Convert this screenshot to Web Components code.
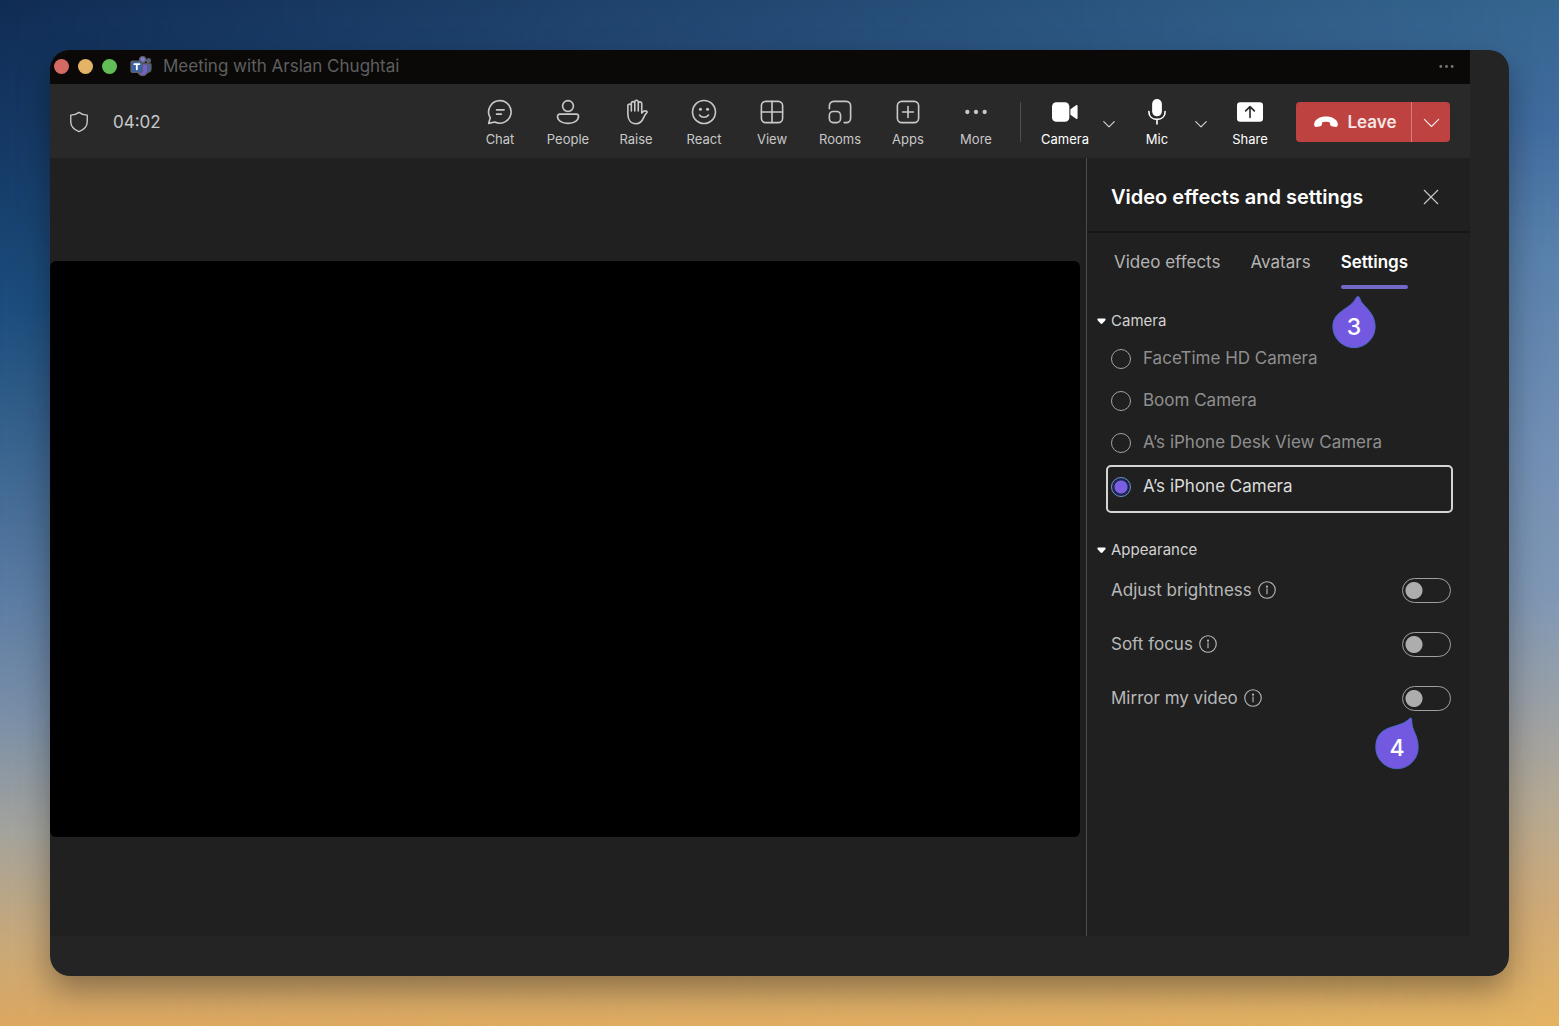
<!DOCTYPE html>
<html lang="en">
<head>
<meta charset="utf-8">
<title>Meeting with Arslan Chughtai</title>
<style>
    body {
        margin: 0;
        font-family: Inter, Roboto, "Liberation Sans", sans-serif;
        color: #c8c8c8;
    }
</style>
</head>
<body>
<meeting-desktop>
    <title-bar>Meeting with Arslan Chughtai</title-bar>
    <meeting-toolbar></meeting-toolbar>
    <video-stage></video-stage>
    <settings-panel></settings-panel>
</meeting-desktop>

<script>
const ICONS = {
    shield: `<path d="M12 1.500c2.600 2 5.600 2.900 9 3v7c0 5.500-3.500 9-9 11-5.500-2-9-5.500-9-11v-7c3.400-.1 6.400-1 9-3z"/>`,
    chat: `<path d="M12 1.500a10.400 10.400 0 1 1-4.800 19.700L1.500 22.500l1.500-5.200A10.400 10.400 0 0 1 12 1.500z"/><path d="M8.800 10h7M8.800 14h4.500"/>`,
    people: `<circle cx="12" cy="6.500" r="5"/><path d="M4.300 14h15.400a2 2 0 0 1 2 2c0 3.800-3.800 6.500-9.700 6.500s-9.700-2.700-9.700-6.500a2 2 0 0 1 2-2z"/>`,
    raise: `<path d="M4.500 14V6.300a1.600 1.600 0 0 1 3.200 0V4a1.600 1.600 0 0 1 3.200 0V2.800a1.600 1.600 0 0 1 3.200 0V4.300a1.600 1.600 0 0 1 3.200 0V13c1-1.500 2.500-2.300 4-1.900.9.300 1.200.9.700 1.500-1.500 1.300-2.200 2.800-3.200 5-1.200 2.900-3 5.200-6.800 5.200-4.800 0-7.500-3.500-7.500-8.800zM7.700 6v5M10.900 4v7M14.100 4v7"/>`,
    react: `<circle cx="12" cy="12" r="10.600"/><path d="M7.800 14.800c2 2.700 6.400 2.700 8.400 0"/><g fill="currentColor" stroke="none"><circle cx="8.700" cy="9.500" r="1.400"/><circle cx="15.300" cy="9.500" r="1.400"/></g>`,
    view: `<rect x="2.200" y="2.200" width="19.600" height="19.600" rx="4"/><path d="M12 2.200v19.600M2.200 12h19.600"/>`,
    rooms: `<path d="M2.200 9v-2.800a4 4 0 0 1 4-4h11.600a4 4 0 0 1 4 4v11.600a4 4 0 0 1-4 4h-2"/><rect x="2.200" y="11.500" width="10.300" height="10.300" rx="3.500"/>`,
    apps: `<rect x="2.200" y="2.200" width="19.600" height="19.600" rx="4"/><path d="M12 7v10M7 12h10"/>`,
    more: `<g fill="currentColor" stroke="none"><circle cx="4" cy="12" r="2"/><circle cx="12" cy="12" r="2"/><circle cx="20" cy="12" r="2"/></g>`,
    camera: `<g fill="currentColor" stroke="none"><rect x="0" y="3" width="16" height="18" rx="4"/><path d="M17 9.500l5.200-3.800c.8-.5 1.400-.1 1.400.7v11.200c0 .8-.6 1.200-1.400.7L17 14.500z"/></g>`,
    mic: `<rect x="7.500" y="0" width="9" height="16" rx="4.500" fill="currentColor" stroke="none"/><path d="M4.500 11.500c0 4.500 3 7.300 7.500 7.300s7.500-2.800 7.500-7.300M12 18.800V23"/>`,
    share: `<rect x="0" y="3" width="24" height="18" rx="3" fill="currentColor" stroke="none"/><path stroke="#292929" d="M12 17V7.500M8 11l4-4 4 4"/>`,
    chevron: `<path d="M3 8l9 9 9-9"/>`,
    close: `<path d="M3 3l18 18M21 3L3 21"/>`,
    hangup: `<path fill="currentColor" stroke="none" d="M12 6.500c6 0 11 2.700 11.800 7 .2 1.500-.2 3.600-1.800 3.500l-4.300-.8c-1.500-.3-1.700-1.800-1.700-3.700-2-1-6-1-8 0 0 1.900-.2 3.400-1.700 3.700L2 17c-1.600.1-2-2-1.800-3.500.8-4.300 5.800-7 11.800-7z"/>`,
    info: `<circle cx="12" cy="12" r="11"/><path d="M12 10.500V17"/><circle cx="12" cy="7.500" r="1.400" fill="currentColor" stroke="none"/>`,
    triangle: `<path fill="currentColor" stroke="none" d="M3 4h18c2.500.5 2.500 4 .8 5.500l-7.300 8c-1.400 1.500-3.600 1.500-5 0l-7.300-8C.5 8 .5 4.500 3 4z"/>`,
    teams: `<circle cx="14" cy="4.200" r="3.600" fill="#7b7fd8"/><circle cx="21" cy="5.500" r="2.300" fill="#4f62b4"/><path fill="#4560b0" d="M17 9.500h6.300c.5 0 .7.300.7.700V15c0 3-2 4.500-4 4.500S17 18 17 15z"/><path fill="#6f62d0" d="M8 9.500h12V17c0 3.700-2.700 6.500-6 6.500S8 20.700 8 17z"/><rect y="6" width="13.500" height="13.500" rx="1.500" fill="#3c62a6"/><path d="M4 9.800h6M7 9.800v6.200" stroke="#fff" stroke-width="2.200"/>`
};

/* <ui-icon name="chat" size="24"> */
class UiIcon extends HTMLElement {
    constructor() {
        super();
        this.attachShadow({ mode: "open" });
    }
    connectedCallback() {
        const size = this.getAttribute("size") || 24;
        const stroke = this.getAttribute("stroke") || 1.5;
        this.shadowRoot.innerHTML = `
            <style>
                :host { display: inline-flex; flex: none; }
                svg { display: block; overflow: visible; }
            </style>
            <svg width="${size}" height="${size}" viewBox="0 0 24 24" fill="none" stroke="currentColor"
                stroke-width="${stroke}" stroke-linecap="round" stroke-linejoin="round" aria-hidden="true">
                ${ICONS[this.getAttribute("name")]}
            </svg>
        `;
    }
}

class MeetingDesktop extends HTMLElement {
    constructor() {
        super();
        this.attachShadow({ mode: "open" });
        this.shadowRoot.innerHTML = `
            <style>
                :host {
                    display: flex;
                    position: relative;
                    box-sizing: border-box;
                    min-height: 100vh;
                    padding: 50px;
                    background: linear-gradient(#356690, #416c9f 12%, #5a82ad 25%, #7390b5 44%, #8098b5 58%, #99a0a8 68%, #b8aa92 79%, #cfaa78 88%, #e4b362);
                }
                /* darker sky, fading out to the right */
                :host::before {
                    content: "";
                    position: absolute;
                    inset: 0;
                    background: linear-gradient(#102c54, #153a66 15%, #1b4c7c 30%, #35608c 42%, #5a7ba2 58%, #7a8fa8 70%, #a3a39c 81%, #c8a878 92%, #dca760);
                    mask-image: linear-gradient(90deg, #000, transparent);
                }
                .shadow {
                    flex: 1;
                    display: flex;
                    position: relative;
                    border-radius: 20px;
                    box-shadow: 0 14px 32px rgba(0, 0, 0, 0.35);
                }
                main {
                    flex: 1;
                    display: grid;
                    grid-template-columns: 1fr 384px;
                    grid-template-rows: 34px 74px 1fr;
                    padding: 0 39px 40px 0;
                    border-radius: 20px;
                    overflow: hidden;
                    background: #242424;
                }
                ::slotted(title-bar), ::slotted(meeting-toolbar) { grid-column: 1 / -1; }
            </style>
            <div class="shadow"><main><slot></slot></main></div>
        `;
    }
}

class TitleBar extends HTMLElement {
    constructor() {
        super();
        this.attachShadow({ mode: "open" });
        this.shadowRoot.innerHTML = `
            <style>
                :host {
                    display: flex;
                    align-items: center;
                    padding: 0 15px 2px 4px;
                    background: #0a0908;
                    color: #5f5f5f;
                    font-size: 17px;
                }
                .lights { display: flex; gap: 9px; margin-right: 14px; }
                .lights i { width: 15px; height: 15px; border-radius: 50%; background: var(--c); }
                h1 { flex: 1; margin: 0 0 0 12px; font-size: 17px; font-weight: 400; line-height: 24px; }
                button { display: flex; padding: 0; border: 0; background: none; color: #777; }
            </style>
            <div class="lights">
                <i style="--c: #d46a64"></i><i style="--c: #e3b466"></i><i style="--c: #62bd56"></i>
            </div>
            <ui-icon name="teams" size="20"></ui-icon>
            <h1><slot></slot></h1>
            <button aria-label="Window options"><ui-icon name="more" size="17"></ui-icon></button>
        `;
    }
}

class ToolButton extends HTMLElement {
    constructor() {
        super();
        this.attachShadow({ mode: "open" });
    }
    connectedCallback() {
        this.shadowRoot.innerHTML = `
            <style>
                :host { display: block; width: 68px; }
                button {
                    display: flex;
                    flex-direction: column;
                    align-items: center;
                    gap: 4px;
                    width: 100%;
                    padding: 4px 0 0;
                    border: 0;
                    background: none;
                    color: inherit;
                    font: 13px/20px Inter, Roboto, sans-serif;
                }
            </style>
            <button><ui-icon name="${this.getAttribute("icon")}" size="26"></ui-icon><slot></slot></button>
        `;
    }
}

class LeaveButton extends HTMLElement {
    constructor() {
        super();
        this.attachShadow({ mode: "open" });
        this.shadowRoot.innerHTML = `
            <style>
                :host {
                    display: flex;
                    height: 40px;
                    border-radius: 4px;
                    overflow: hidden;
                    background: #bd4240;
                    color: #f6e6e4;
                }
                button {
                    display: flex;
                    align-items: center;
                    justify-content: center;
                    gap: 9px;
                    padding: 0;
                    border: 0;
                    background: none;
                    color: inherit;
                    font: 600 17px/24px Inter, Roboto, sans-serif;
                }
                .leave { width: 115px; padding-left: 4px; }
                .leave ui-icon { color: #fff; }
                .options { width: 39px; border-left: 1px solid #d9807c; }
            </style>
            <button class="leave"><ui-icon name="hangup" size="24"></ui-icon><slot></slot></button>
            <button class="options" aria-label="Leave options"><ui-icon name="chevron" size="19"></ui-icon></button>
        `;
    }
}

class MeetingToolbar extends HTMLElement {
    constructor() {
        super();
        this.attachShadow({ mode: "open" });
        this.shadowRoot.innerHTML = `
            <style>
                :host {
                    display: flex;
                    align-items: center;
                    padding: 2px 20px 0 18px;
                    background: #292929;
                }
                time { margin-left: 23px; font-size: 17px; line-height: 24px; }
                nav { display: flex; align-items: center; margin-left: auto; }
                hr { width: 1px; height: 40px; margin: 0 10px; border: 0; background: #524d4b; }
                .on { color: #fff; }
                .drop {
                    display: flex;
                    justify-content: center;
                    width: 24px;
                    margin: 4px 2px 0 -2px;
                    padding: 0;
                    border: 0;
                    background: none;
                    color: #d0d0d0;
                }
                .share { margin: 0 12px 0 1px; }
            </style>
            <ui-icon name="shield" size="22"></ui-icon>
            <time>04:02</time>
            <nav aria-label="Meeting controls">
                <tool-button icon="chat">Chat</tool-button>
                <tool-button icon="people">People</tool-button>
                <tool-button icon="raise">Raise</tool-button>
                <tool-button icon="react">React</tool-button>
                <tool-button icon="view">View</tool-button>
                <tool-button icon="rooms">Rooms</tool-button>
                <tool-button icon="apps">Apps</tool-button>
                <tool-button icon="more">More</tool-button>
                <hr>
                <tool-button class="on" icon="camera">Camera</tool-button>
                <button class="drop" aria-label="Camera options"><ui-icon name="chevron" size="14" stroke="2"></ui-icon></button>
                <tool-button class="on" icon="mic">Mic</tool-button>
                <button class="drop" aria-label="Microphone options"><ui-icon name="chevron" size="14" stroke="2"></ui-icon></button>
                <tool-button class="on share" icon="share">Share</tool-button>
                <leave-button>Leave</leave-button>
            </nav>
        `;
    }
}

class VideoStage extends HTMLElement {
    constructor() {
        super();
        this.attachShadow({ mode: "open" });
        this.shadowRoot.innerHTML = `
            <style>
                :host {
                    display: flex;
                    align-items: center;
                    padding: 4px 6px 0 0;
                    background: #202020;
                }
                div { flex: 1; aspect-ratio: 1030 / 576; border-radius: 6px; background: #000; }
            </style>
            <div role="img" aria-label="Video"></div>
        `;
    }
}

/* numbered marker whose tip points at a control above it */
class StepPin extends HTMLElement {
    constructor() {
        super();
        this.attachShadow({ mode: "open" });
        this.shadowRoot.innerHTML = `
            <style>
                :host {
                    position: absolute;
                    width: 44px;
                    height: 54px;
                    color: #fff;
                    font-size: 23px;
                    font-weight: 500;
                    line-height: 44px;
                    text-align: center;
                }
                svg { position: absolute; inset: 0; }
                span { position: absolute; inset: 10px 0 0; }
                path { fill: #7259e0; stroke: #4a68c4; }
                path.right, :host([lean="right"]) path.left { display: none; }
                :host([lean="right"]) path.right { display: inline; }
            </style>
            <svg width="44" height="54" viewBox="0 0 44 54" aria-hidden="true">
                <path class="left" d="M26 1.500c1 0 1.500.8 2 2.500 1.500 6.500 15.200 12.500 15.200 27.500A21.200 21.200 0 0 1 .8 31.500C.8 16 18.500 14 23.500 4c.8-1.600 1.500-2.500 2.500-2.500z"/>
                <path class="right" d="M35.500 2c.8 0 1.200.6 1.200 2 0 12 6.500 14 6.500 27.500a21.200 21.200 0 0 1-42.400 0C.8 8 23 13 33 4c1.200-1.300 1.700-2 2.500-2z"/>
            </svg>
            <span><slot></slot></span>
        `;
    }
}

class CameraOption extends HTMLElement {
    constructor() {
        super();
        this.attachShadow({ mode: "open" });
    }
    connectedCallback() {
        const checked = this.hasAttribute("checked");
        this.shadowRoot.innerHTML = `
            <style>
                :host { display: block; color: #8f8f8f; font-size: 17px; line-height: 24px; }
                label {
                    display: flex;
                    gap: 12px;
                    box-sizing: border-box;
                    height: 42px;
                    padding: 7px 5px;
                }
                :host([checked]) { color: #dcdcdc; }
                :host([checked]) label {
                    height: 48px;
                    padding: 7px 3px;
                    border: 2px solid #d4d4d4;
                    border-radius: 5px;
                }
                input {
                    appearance: none;
                    flex: none;
                    box-sizing: border-box;
                    width: 20px;
                    height: 20px;
                    margin: 3px 0 0;
                    border: 1px solid #a0a0a0;
                    border-radius: 50%;
                }
                input:checked {
                    border-color: #6b96cc;
                    background: radial-gradient(circle, #7a5fe0 6px, #1d2450 7px);
                }
            </style>
            <label><input type="radio" ${checked ? "checked" : ""}><slot></slot></label>
        `;
    }
}

class ToggleRow extends HTMLElement {
    constructor() {
        super();
        this.attachShadow({ mode: "open" });
        this.shadowRoot.innerHTML = `
            <style>
                :host {
                    display: flex;
                    align-items: center;
                    height: 26px;
                    color: #b8b8b8;
                    font-size: 17px;
                    line-height: 24px;
                }
                label { display: flex; flex: 1; align-items: center; gap: 6px; }
                input {
                    appearance: none;
                    box-sizing: border-box;
                    width: 49px;
                    height: 25px;
                    margin: 0 0 0 auto;
                    border: 1px solid #a0a0a0;
                    border-radius: 13px;
                    background: radial-gradient(circle at 11px 50%, #adadad 8px, transparent 9px);
                }
            </style>
            <label><slot></slot><ui-icon name="info" size="18"></ui-icon><input type="checkbox" role="switch"></label>
        `;
    }
}

class SettingsPanel extends HTMLElement {
    constructor() {
        super();
        this.attachShadow({ mode: "open" });
        this.shadowRoot.innerHTML = `
            <style>
                :host {
                    display: block;
                    position: relative;
                    border-left: 1px solid #4c4c4c;
                    background: #202020;
                }
                header {
                    display: flex;
                    align-items: center;
                    justify-content: space-between;
                    box-sizing: border-box;
                    height: 75px;
                    padding: 4px 30px 0 24px;
                    border-bottom: 2px solid #171717;
                }
                h2 { margin: 0; color: #fff; font-size: 20px; font-weight: 600; line-height: 28px; }
                button { padding: 0; border: 0; background: none; color: inherit; font: inherit; }
                .close { display: flex; }
                .tabs {
                    display: flex;
                    gap: 30px;
                    padding: 17px 27px 0;
                    font-size: 17px;
                    line-height: 24px;
                    color: #b4b4b4;
                }
                .tabs button { padding-bottom: 15px; white-space: nowrap; }
                .tabs .active { padding: 0; color: #fff; font-weight: 600; }
                .active::after {
                    content: "";
                    display: block;
                    height: 4px;
                    margin-top: 11px;
                    border-radius: 2px;
                    background: #7069c8;
                }
                h3 {
                    display: flex;
                    align-items: center;
                    gap: 5px;
                    margin: 0;
                    padding-left: 10px;
                    color: #d2d2d2;
                    font-size: 15px;
                    font-weight: 400;
                    line-height: 20px;
                }
                h3 ui-icon { color: #fff; }
                .cameras { margin: 8px 17px 27px 19px; }
                section { padding-top: 22px; }
                .toggles { display: flex; flex-direction: column; gap: 28px; margin: 17px 19px 0 24px; }
                .three { right: 94px; top: 137px; }
                .four { right: 51px; top: 558px; }
            </style>
            <header>
                <h2>Video effects and settings</h2>
                <button class="close" aria-label="Close"><ui-icon name="close" size="18"></ui-icon></button>
            </header>
            <div class="tabs" role="tablist">
                <button role="tab">Video effects</button>
                <button role="tab">Avatars</button>
                <button role="tab" class="active" aria-selected="true">Settings</button>
            </div>
            <section>
                <h3><ui-icon name="triangle" size="9"></ui-icon>Camera</h3>
                <div class="cameras" role="radiogroup" aria-label="Camera">
                    <camera-option>FaceTime HD Camera</camera-option>
                    <camera-option>Boom Camera</camera-option>
                    <camera-option>A’s iPhone Desk View Camera</camera-option>
                    <camera-option checked>A’s iPhone Camera</camera-option>
                </div>
                <h3><ui-icon name="triangle" size="9"></ui-icon>Appearance</h3>
                <div class="toggles">
                    <toggle-row>Adjust brightness</toggle-row>
                    <toggle-row>Soft focus</toggle-row>
                    <toggle-row>Mirror my video</toggle-row>
                </div>
            </section>
            <step-pin class="three">3</step-pin>
            <step-pin class="four" lean="right">4</step-pin>
        `;
    }
}

customElements.define("ui-icon", UiIcon);
customElements.define("tool-button", ToolButton);
customElements.define("leave-button", LeaveButton);
customElements.define("step-pin", StepPin);
customElements.define("camera-option", CameraOption);
customElements.define("toggle-row", ToggleRow);
customElements.define("title-bar", TitleBar);
customElements.define("meeting-toolbar", MeetingToolbar);
customElements.define("video-stage", VideoStage);
customElements.define("settings-panel", SettingsPanel);
customElements.define("meeting-desktop", MeetingDesktop);
</script>
</body>
</html>
